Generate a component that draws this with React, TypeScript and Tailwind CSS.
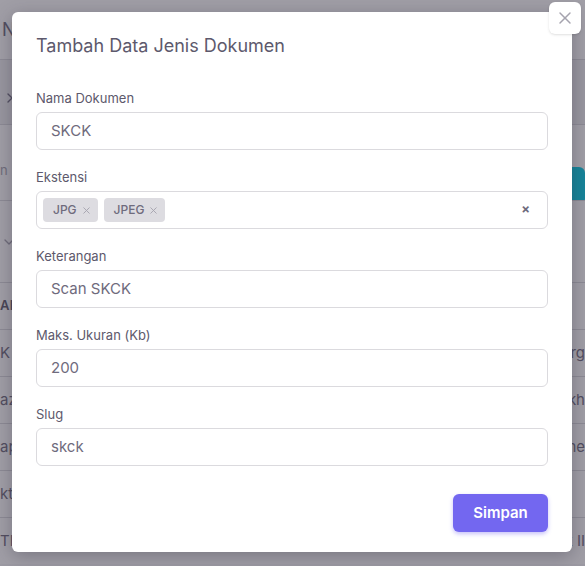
import { ChevronRight, ChevronDown, X } from 'lucide-react';

type Row = { left: string; right: string };

// table rows behind the dialog; only the row edges show
const rows: Row[] = [
  { left: 'K', right: 'arg' },
  { left: 'aza', right: 'kh' },
  { left: 'ap', right: 'ne' },
  { left: 'kt', right: '' },
  { left: 'TF', right: 'k II' },
];

interface FieldProps {
  label: string;
  value: string;
}

const Field = ({ label, value }: FieldProps) => (
  <div className="flex flex-col">
    <label className="text-[13px] leading-5 text-[#5d596c] mb-1">{label}</label>
    <div className="h-[38px] rounded-md border border-[#dbdade] bg-white pl-[14px] flex items-center text-[15px] text-[#6f6b7d]">
      {value}
    </div>
  </div>
);

const Chip = ({ text }: { text: string }) => (
  <span className="h-6 rounded bg-[#dddce1] pl-[10px] pr-[6px] flex items-center gap-1 text-[12px] font-medium text-[#6f6b7d]">
    {text}
    <X className="w-[11px] h-[11px] text-[#a5a3ae]" strokeWidth={2} />
  </span>
);

export default function App() {
  return (
    <div className="relative w-[585px] h-[566px] overflow-hidden bg-[#f8f7fa] font-['Inter',sans-serif]">
      {/* page behind the dialog */}
      <div className="flex flex-col text-[#5d596c]">
        <div className="h-[60px] bg-white flex items-center pl-[2px] text-[18px] text-[#6f6b7d] border-b border-[#dbdade]">
          N
        </div>
        <div className="h-[64px] bg-[#f1f0f3] flex items-center pl-[2px] pt-3">
          <ChevronRight className="w-4 h-4 text-[#6f6b7d]" />
        </div>
        <div className="h-[76px] bg-white flex items-end justify-between border-t border-[#dbdade]">
          <span className="text-[13px] text-[#a5a3ae] mb-5">n</span>
          <span className="h-[38px] mb-[-5px] rounded-md bg-[#00cfe8] text-white font-semibold text-[15px] flex items-center pl-[3px] pr-4">
            w
          </span>
        </div>
        <div className="h-[82px] bg-white flex items-center border-t border-[#dbdade]">
          <ChevronDown className="w-4 h-4 text-[#a5a3ae] ml-[1px]" />
        </div>
        <div className="h-[47px] bg-white flex items-center border-t border-[#dbdade] text-[13px] font-semibold tracking-wide text-[#5d596c]">
          <span>AM</span>
        </div>
        {rows.map((r) => (
          <div
            key={r.left}
            className="h-[47px] bg-white flex items-center justify-between border-t border-[#dbdade] text-[15px] text-[#6f6b7d]"
          >
            <span className="whitespace-nowrap">{r.left}</span>
            <span className="whitespace-nowrap">{r.right}</span>
          </div>
        ))}
      </div>

      {/* backdrop + dialog */}
      <div className="absolute inset-0 bg-[#2f2b3d]/[0.46]">
        <div className="relative mt-3 ml-3 w-[560px] h-[540px] bg-white rounded-md shadow-[0_4px_18px_rgba(47,43,61,0.35)] px-6 pt-5 pb-5 flex flex-col">
          <button className="absolute -top-[10px] -right-[9px] w-8 h-8 rounded-md bg-white shadow-sm flex items-center justify-center">
            <X className="w-5 h-5 text-[#a5a3ae]" strokeWidth={1.75} />
          </button>

          <h2 className="text-[18px] leading-7 font-normal text-[#5d596c]">Tambah Data Jenis Dokumen</h2>

          <div className="mt-7 flex flex-col gap-[17px]">
            <Field label="Nama Dokumen" value="SKCK" />

            <div className="flex flex-col">
              <label className="text-[13px] leading-5 text-[#5d596c] mb-1">Ekstensi</label>
              <div className="h-[38px] rounded-md border border-[#dbdade] bg-white pl-[6px] pr-[17px] flex items-center gap-[6px]">
                <Chip text="JPG" />
                <Chip text="JPEG" />
                <span className="ml-auto text-[13px] font-bold text-[#6f6b7d]">×</span>
              </div>
            </div>

            <Field label="Keterangan" value="Scan SKCK" />
            <Field label="Maks. Ukuran (Kb)" value="200" />
            <Field label="Slug" value="skck" />
          </div>

          <div className="mt-auto flex justify-end">
            <button className="h-[38px] w-[95px] rounded-md bg-[#7367f0] text-white text-[15px] font-semibold shadow-[0_2px_4px_rgba(115,103,240,0.4)]">
              Simpan
            </button>
          </div>
        </div>
      </div>
    </div>
  );
}
